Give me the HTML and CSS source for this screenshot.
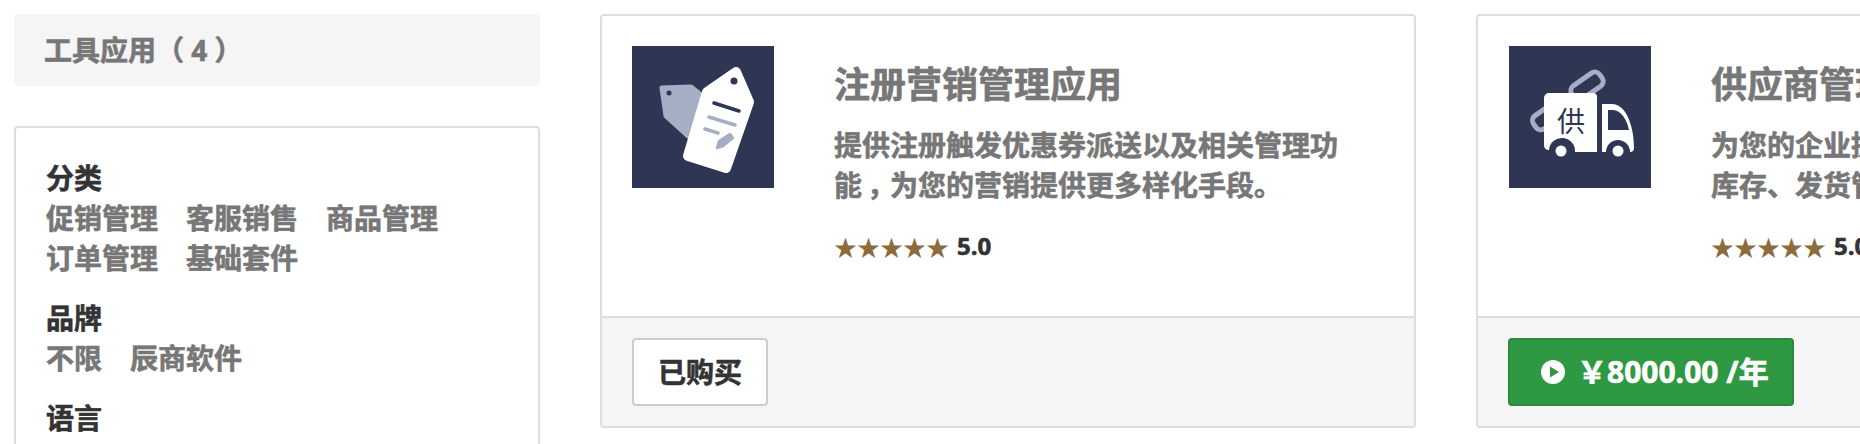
FILE: index.html
```html
<!DOCTYPE html>
<html lang="zh-CN">
<head>
<meta charset="utf-8">
<title>工具应用</title>
<link rel="stylesheet" href="styles.css">
</head>
<body>
<main class="page">
  <aside class="sidebar">
    <h2 class="count">工具应用<span class="count-num">（ 4 ）</span></h2>
    <section class="filters">
      <div class="group">
        <h3 class="group-title">分类</h3>
        <div class="links"><a>促销管理</a><a>客服销售</a><a>商品管理</a><a>订单管理</a><a>基础套件</a></div>
      </div>
      <div class="group">
        <h3 class="group-title">品牌</h3>
        <div class="links"><a>不限</a><a>辰商软件</a></div>
      </div>
      <div class="group">
        <h3 class="group-title">语言</h3>
      </div>
    </section>
  </aside>

  <article class="card">
    <div class="card-body">
      <svg class="app-icon" viewBox="0 0 142 142" aria-hidden="true">
        <rect width="142" height="142" fill="#2e3654"/>
        <path d="M30 42 L59 41 L69 49 L56 90 L34 70 Z" fill="#a6aec6" stroke="#a6aec6" stroke-width="5" stroke-linejoin="round"/>
        <circle cx="37" cy="47" r="2.5" fill="#2e3654"/>
        <path d="M104 26 L117 56 L94 122 L56 110 L75 46 Z" fill="#fff" stroke="#fff" stroke-width="10" stroke-linejoin="round"/>
        <circle cx="102" cy="35" r="3.5" fill="#2e3654"/>
        <path d="M82 57 L107 65" stroke="#2e3654" stroke-width="3.5" stroke-linecap="round"/>
        <path d="M77 71 L103 79 M73 83 L86 87" stroke="#a6aec6" stroke-width="3.5" stroke-linecap="round"/>
        <path d="M85 102 L87 95 L98 88 L101 92 L91 100 Z" fill="#a6aec6" stroke="#a6aec6" stroke-width="2.5" stroke-linejoin="round"/>
      </svg>
      <div class="info">
        <h1 class="app-title">注册营销管理应用</h1>
        <p class="desc">提供注册触发优惠券派送以及相关管理功能<span class="comma">，</span>为您的营销提供更多样化手段。</p>
        <div class="rating"><span class="stars">★★★★★</span><span class="score">5.0</span></div>
      </div>
    </div>
    <div class="card-foot"><a class="btn btn-owned">已购买</a></div>
  </article>

  <article class="card card-next">
    <div class="card-body">
      <svg class="app-icon" viewBox="0 0 142 142" aria-hidden="true">
        <rect width="142" height="142" fill="#2e3654"/>
        <g fill="none" stroke="#a6aec6" stroke-width="5">
          <rect x="61" y="32" width="34" height="16" rx="6" transform="rotate(-35 78 40)"/>
          <rect x="23" y="63" width="30" height="16" rx="6" transform="rotate(-35 38 71)"/>
        </g>
        <path d="M40 47 H84 a4 4 0 0 1 4 4 V106 H66 a13 13 0 0 0 -26 -2 a5 5 0 0 1 -5 -4 V52 a5 5 0 0 1 5 -5 Z" fill="#fff"/>
        <path d="M93 58 H103 C117 58 125 80 125 102 a4 4 0 0 1 -4 4 a12 12 0 0 0 -24 0 H93 Z" fill="#fff"/>
        <path d="M99 64 H104 C112 64 118 74 120 84 H99 Z" fill="#2e3654"/>
        <circle cx="52" cy="105" r="5.5" fill="#fff"/>
        <circle cx="109" cy="105" r="5.5" fill="#fff"/>
        <text class="icon-char" x="62" y="86" text-anchor="middle">供</text>
      </svg>
      <div class="info">
        <h1 class="app-title">供应商管理应用</h1>
        <p class="desc">为您的企业提供供应链管理，统一采购、库存、发货管理等环节。</p>
        <div class="rating"><span class="stars">★★★★★</span><span class="score">5.0</span></div>
      </div>
    </div>
    <div class="card-foot">
      <a class="btn btn-buy">
        <svg class="play" viewBox="0 0 24 24" aria-hidden="true"><circle cx="12" cy="12" r="12" fill="#fff"/><path d="M9 6.5 L18 12 L9 17.5 Z" fill="#2f9842"/></svg>
        <span class="price">￥8000.00 /年</span>
      </a>
    </div>
  </article>
</main>
</body>
</html>
```
FILE: styles.css
```css
* { box-sizing: border-box; }
html, body { margin: 0; padding: 0; background: #fff; }
body {
  font-family: "Open Sans", "Noto Sans CJK SC", sans-serif;
  font-weight: 700;
  font-size: 28px;
  line-height: 40px;
  color: #777;
  -webkit-text-stroke: 0.6px currentColor;
}
h1, h2, h3, p { margin: 0; font: inherit; }
.page {
  display: flex;
  gap: 60px;
  height: 444px;
  padding: 14px 0 0 14px;
  overflow: hidden;
}
.sidebar { flex: none; width: 526px; }
.count {
  height: 72px;
  padding: 0 30px;
  line-height: 72px;
  background: #f5f5f5;
  border-radius: 4px;
}
.filters {
  margin-top: 40px;
  padding: 30px 30px 40px;
  border: 2px solid #ddd;
  border-radius: 4px;
}
.group { margin-bottom: 20px; }
.group-title { color: #333; }
.links { display: flex; flex-wrap: wrap; column-gap: 28px; }
.card {
  flex: none;
  width: 816px;
  height: 414px;
  border: 2px solid #ddd;
  border-radius: 4px;
  overflow: hidden;
}
.card-body {
  display: flex;
  gap: 60px;
  height: 300px;
  padding: 30px;
}
.card-next .card-body { padding-left: 31px; }
.app-icon { flex: none; width: 142px; height: 142px; display: block; }
.icon-char {
  font-family: "Noto Sans CJK SC", sans-serif;
  font-size: 28px;
  font-weight: 400;
  fill: #2e3654;
  -webkit-text-stroke: 0;
}
.info { width: 510px; flex: none; }
.app-title { margin-top: 14px; font-size: 36px; line-height: 50px; }
.desc { margin-top: 15px; }
.comma { font-feature-settings: "halt"; padding: 0 9px 0 5px; }
.rating { display: flex; align-items: center; margin-top: 21px; }
.stars {
  font-family: "Noto Sans CJK SC", sans-serif;
  font-size: 23px;
  font-weight: 400;
  color: #8b6c3a;
  -webkit-text-stroke: 0;
}
.score { margin-left: 8px; font-size: 24px; color: #333; }
.card-foot {
  height: 110px;
  padding: 20px 30px;
  background: #f5f5f5;
  border-top: 2px solid #ddd;
}
.btn {
  display: inline-flex;
  align-items: center;
  height: 68px;
  border-radius: 4px;
  border: 2px solid;
}
.btn-owned {
  padding: 0 24px;
  color: #333;
  background: #fff;
  border-color: #ccc;
}
.btn-buy {
  gap: 12px;
  padding: 0 23px 0 31px;
  color: #fff;
  background: #2f9842;
  border-color: #2b8a3c;
}
.play { width: 24px; height: 24px; flex: none; }
.price { font-size: 30px; white-space: nowrap; }
```
